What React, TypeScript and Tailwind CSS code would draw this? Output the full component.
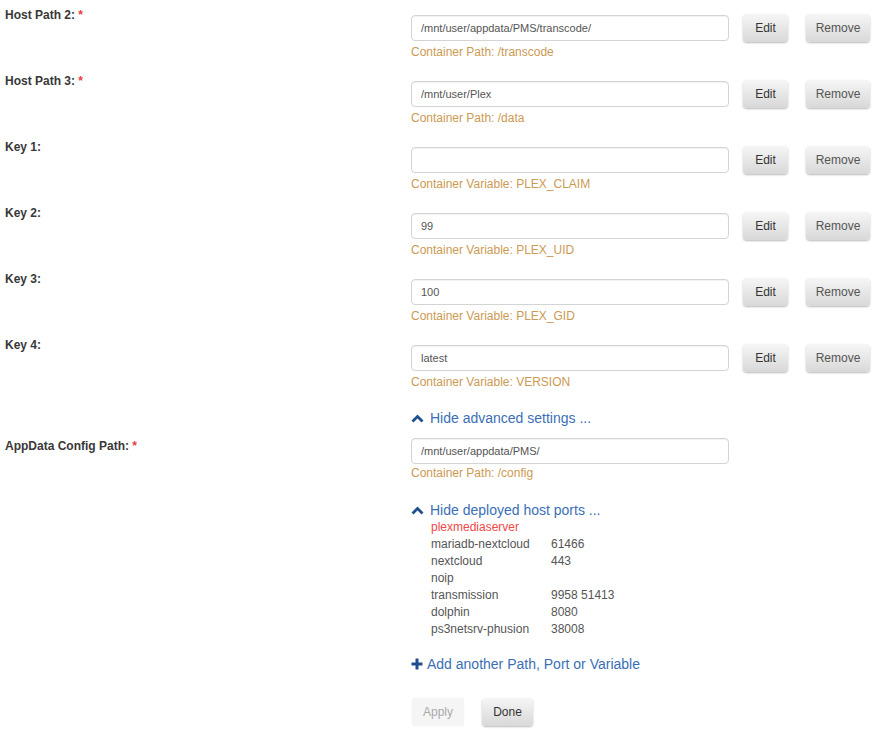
import type { ReactNode } from "react";

interface Field {
  label: string;
  required?: boolean;
  value: string;
  note: string;
}

const fields: Field[] = [
  { label: "Host Path 2:", required: true, value: "/mnt/user/appdata/PMS/transcode/", note: "Container Path: /transcode" },
  { label: "Host Path 3:", required: true, value: "/mnt/user/Plex", note: "Container Path: /data" },
  { label: "Key 1:", value: "", note: "Container Variable: PLEX_CLAIM" },
  { label: "Key 2:", value: "99", note: "Container Variable: PLEX_UID" },
  { label: "Key 3:", value: "100", note: "Container Variable: PLEX_GID" },
  { label: "Key 4:", value: "latest", note: "Container Variable: VERSION" },
];

const ports: [string, string][] = [
  ["mariadb-nextcloud", "61466"],
  ["nextcloud", "443"],
  ["noip", ""],
  ["transmission", "9958 51413"],
  ["dolphin", "8080"],
  ["ps3netsrv-phusion", "38008"],
];

const btn =
  "h-[28px] rounded-[4px] bg-linear-to-b from-[#f6f6f6] to-[#d8d8d8] text-[12px] text-[#333] shadow-[0_1px_2px_rgba(0,0,0,0.28)]";

function Label({ text, required }: { text: string; required?: boolean }) {
  return (
    <div className="w-[411px] shrink-0 pl-[5px] text-[12px] font-bold leading-[16px] text-[#383838]">
      {text}
      {required && <span className="text-[#e8403c]"> *</span>}
    </div>
  );
}

function PathInput({ value }: { value: string }) {
  return (
    <input
      readOnly
      value={value}
      className="h-[26px] w-[318px] rounded-[4px] border border-[#d4d4d4] bg-white pl-[9px] text-[11px] text-[#555] shadow-[inset_0_1px_1px_rgba(0,0,0,0.06)] outline-none"
    />
  );
}

function ChevronUp() {
  return (
    <svg width="13" height="9" viewBox="0 0 13 9" className="mr-[6px]">
      <path d="M1.5 7.5 L6.5 2.5 L11.5 7.5" fill="none" stroke="#1e4f8f" strokeWidth="2.8" />
    </svg>
  );
}

function PlusIcon() {
  return (
    <svg width="12" height="12" viewBox="0 0 12 12" className="mr-[4px]">
      <path d="M6 0.5 V11.5 M0.5 6 H11.5" stroke="#1e4f8f" strokeWidth="3" />
    </svg>
  );
}

function Indent({ children, className = "" }: { children: ReactNode; className?: string }) {
  return <div className={`pl-[411px] ${className}`}>{children}</div>;
}

export default function App() {
  return (
    <div className="min-h-[750px] w-[893px] bg-white pt-[7px] font-['Liberation_Sans',Arial,sans-serif]">
      {fields.map((f) => (
        <div key={f.label} className="flex">
          <Label text={f.label} required={f.required} />
          <div className="pb-[13px] pt-[7px]">
            <div className="flex items-center">
              <PathInput value={f.value} />
              <button className={`${btn} ml-[14px] w-[45px]`}>Edit</button>
              <button className={`${btn} ml-[18px] w-[64px] text-[#555]`}>Remove</button>
            </div>
            <div className="mt-[2px] text-[12px] leading-[16px] text-[#cc9a52]">{f.note}</div>
          </div>
        </div>
      ))}

      <Indent className="pt-[6px]">
        <div className="flex items-center text-[14px] leading-[18px] text-[#3a6fb5]">
          <ChevronUp />
          Hide advanced settings ...
        </div>
      </Indent>

      <div className="mt-[11px] flex">
        <Label text="AppData Config Path:" required />
        <div>
          <PathInput value="/mnt/user/appdata/PMS/" />
          <div className="mt-[1px] text-[12px] leading-[16px] text-[#cc9a52]">Container Path: /config</div>
        </div>
      </div>

      <Indent className="mt-[20px]">
        <div className="flex items-center text-[14px] leading-[18px] text-[#3a6fb5]">
          <ChevronUp />
          Hide deployed host ports ...
        </div>
        <div className="pl-[20px] text-[12px] leading-[17px] text-[#555]">
          <div className="text-[#f04848]">plexmediaserver</div>
          {ports.map(([name, port]) => (
            <div key={name} className="flex">
              <span className="w-[120px]">{name}</span>
              <span>{port}</span>
            </div>
          ))}
        </div>
      </Indent>

      <Indent className="mt-[17px]">
        <div className="flex items-center text-[14px] leading-[18px] text-[#3a6fb5]">
          <PlusIcon />
          Add another Path, Port or Variable
        </div>
      </Indent>

      <Indent className="mt-[25px] pb-[24px]">
        <div className="flex">
          <button className="ml-[1px] h-[28px] w-[52px] rounded-[4px] bg-[#f5f5f5] text-[12px] text-[#aaa] shadow-[0_0_1px_rgba(0,0,0,0.15)]">
            Apply
          </button>
          <button className={`${btn} ml-[18px] w-[51px]`}>Done</button>
        </div>
      </Indent>
    </div>
  );
}
